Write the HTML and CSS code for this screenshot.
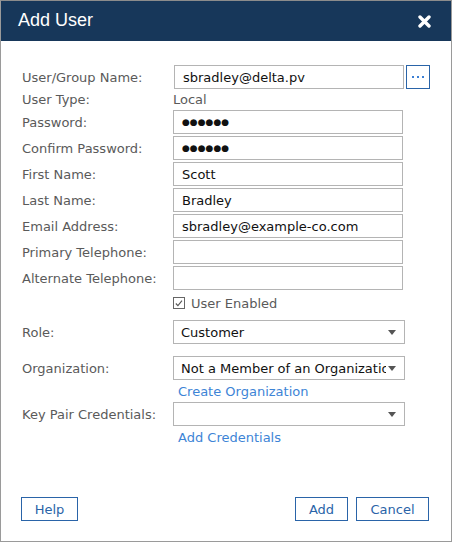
FILE: index.html
```html
<!DOCTYPE html>
<html>
<head>
<meta charset="utf-8">
<link rel="stylesheet" href="styles.css">
</head>
<body>
<div class="dialog">
  <div class="header">
    <span class="title">Add User</span>
    <svg class="close" width="13" height="13" viewBox="0 0 13 13"><path d="M2 2 L11 11 M11 2 L2 11" stroke="#fff" stroke-width="3.4" stroke-linecap="round"/></svg>
  </div>
  <div class="form">
    <div class="row r-user">
      <label class="lbl">User/Group Name:</label>
      <div class="field"><div class="input">sbradley@delta.pv</div><div class="dots"><span></span><span></span><span></span></div></div>
    </div>
    <div class="row r-type">
      <label class="lbl">User Type:</label>
      <div class="value">Local</div>
    </div>
    <div class="row"><label class="lbl">Password:</label><div class="input pw">●●●●●●</div></div>
    <div class="row"><label class="lbl">Confirm Password:</label><div class="input pw">●●●●●●</div></div>
    <div class="row"><label class="lbl">First Name:</label><div class="input">Scott</div></div>
    <div class="row"><label class="lbl">Last Name:</label><div class="input">Bradley</div></div>
    <div class="row"><label class="lbl">Email Address:</label><div class="input">sbradley@example-co.com</div></div>
    <div class="row"><label class="lbl">Primary Telephone:</label><div class="input"></div></div>
    <div class="row"><label class="lbl">Alternate Telephone:</label><div class="input"></div></div>
    <div class="row r-check">
      <span class="lbl"></span>
      <div class="check"><span class="box"><svg width="11" height="11" viewBox="0 0 11 11"><path d="M2 5.5 L4.3 7.8 L8.8 2.3" fill="none" stroke="#555" stroke-width="1.2"/></svg></span><span class="check-text">User Enabled</span></div>
    </div>
    <div class="row r-role"><label class="lbl">Role:</label><div class="select"><span class="sel-text">Customer</span><span class="arrow"></span></div></div>
    <div class="row r-org"><label class="lbl">Organization:</label><div class="select"><span class="sel-text">Not a Member of an Organization</span><span class="arrow"></span></div></div>
    <div class="row r-link"><span class="lbl"></span><a class="link">Create Organization</a></div>
    <div class="row r-key"><label class="lbl">Key Pair Credentials:</label><div class="select"><span class="sel-text"></span><span class="arrow"></span></div></div>
    <div class="row r-link"><span class="lbl"></span><a class="link">Add Credentials</a></div>
  </div>
  <div class="footer">
    <button class="btn btn-help">Help</button>
    <div class="spacer"></div>
    <button class="btn btn-add">Add</button>
    <button class="btn btn-cancel">Cancel</button>
  </div>
</div>
</body>
</html>
```
FILE: styles.css
```css
* { box-sizing: border-box; }
html, body { margin: 0; padding: 0; background: #fff; }
body { font-family: "DejaVu Sans", Tahoma, sans-serif; font-size: 13px; }
.dialog {
  width: 452px; height: 542px;
  border: 1px solid #9a9a9a;
  border-top-color: #8c8c8c;
  display: flex; flex-direction: column;
  background: #fff;
}
.header {
  height: 40px;
  background: #17375a;
  display: flex; align-items: center;
  padding: 0 20px 0 17px;
  flex: none;
}
.title {
  font-family: "Liberation Sans", Arial, sans-serif;
  font-size: 18px; color: #fff;
  flex: 1;
  padding-bottom: 1px;
}
.close { flex: none; margin-top: 1px; }
.form {
  padding: 24px 0 0 21px;
  display: flex; flex-direction: column;
  gap: 2px;
}
.row { display: flex; align-items: center; height: 24px; }
.lbl { width: 151px; flex: none; color: #5a5a5a; }
.field { display: flex; gap: 2px; }
.input {
  width: 230px; height: 24px;
  border: 1px solid #b4b4b4;
  padding: 0 8px;
  display: flex; align-items: center;
  color: #111;
  white-space: nowrap; overflow: hidden;
}
.r-user .input { margin-left: 1px; }
.pw { font-size: 9px; padding-left: 8px; }
.dots {
  width: 24px; height: 24px;
  border: 1px solid #2a64a8;
  display: flex; align-items: center; justify-content: center; gap: 3px;
}
.dots span { width: 2px; height: 2px; background: #3b7fd4; }
.r-type { height: 17px; }
.value { color: #5a5a5a; }
.r-check { height: 20px; }
.check { display: flex; align-items: center; gap: 6px; padding-top: 2px; }
.box {
  width: 12px; height: 12px; border: 1px solid #666;
  display: flex; align-items: center; justify-content: center;
  background: #fff;
}
.box svg { display: block; }
.check-text { color: #5a5a5a; }
.r-role { margin-top: 6px; }
.r-org { margin-top: 10px; }
.select {
  width: 232px; height: 24px;
  border: 1px solid #b4b4b4;
  display: flex; align-items: center;
  padding: 0 8px 0 7px;
  color: #111;
}
.sel-text { flex: 1; white-space: nowrap; overflow: hidden; }
.arrow {
  flex: none; margin-left: 2px;
  width: 0; height: 0;
  border-left: 4px solid transparent;
  border-right: 4px solid transparent;
  border-top: 5px solid #555;
}
.r-link { height: 18px; }
.link { color: #3d84d6; padding-left: 5px; }
.footer {
  margin-top: auto;
  display: flex; align-items: center;
  padding: 0 22px 20px 20px;
}
.spacer { flex: 1; }
.btn {
  height: 24px;
  border: 1px solid #2a64a8;
  background: #fff;
  color: #2a64a8;
  font-family: "DejaVu Sans", Tahoma, sans-serif;
  font-size: 13px;
  padding: 0;
}
.btn-help { width: 57px; }
.btn-add { width: 53px; margin-right: 8px; }
.btn-cancel { width: 73px; }
```
